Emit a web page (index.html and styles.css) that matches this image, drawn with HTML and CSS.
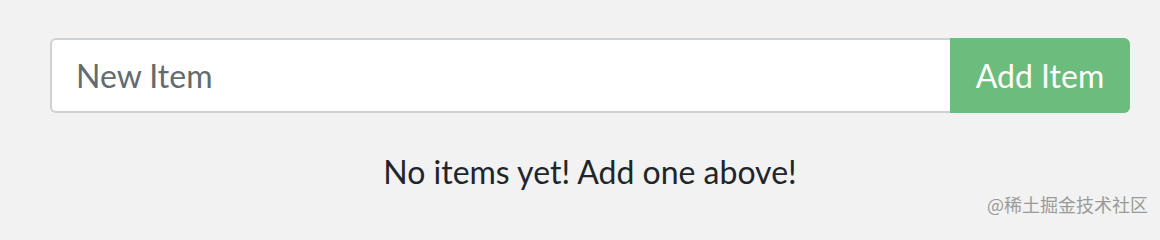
FILE: index.html
```html
<!DOCTYPE html>
<html>
<head>
<meta charset="utf-8">
<link rel="stylesheet" href="styles.css">
</head>
<body>
<div class="page">
  <form class="add-form">
    <input class="item-input" type="text" placeholder="New Item">
    <button class="add-btn" type="button">Add Item</button>
  </form>
  <p class="empty">No items yet! Add one above!</p>
</div>
<div class="watermark">@稀土掘金技术社区</div>
</body>
</html>
```
FILE: styles.css
```css
html, body {
  margin: 0;
  padding: 0;
}
body {
  background: #f2f2f2;
  font-family: Lato, "Noto Sans", sans-serif;
  width: 1160px;
  height: 226px;
  overflow: hidden;
  position: relative;
}
.page {
  padding: 38px 30px 0 50px;
}
.add-form {
  display: flex;
  height: 75px;
  margin: 0;
}
.item-input {
  flex: 1;
  box-sizing: border-box;
  height: 75px;
  margin: 0;
  border: 2px solid #cfd2d4;
  border-right: none;
  border-radius: 6px 0 0 6px;
  background: #fff;
  padding: 0 24px;
  font-family: Lato, sans-serif;
  font-size: 32px;
  color: #495057;
  outline: none;
}
.item-input::placeholder {
  color: #636a70;
}
.add-btn {
  width: 180px;
  height: 75px;
  margin: 0;
  border: none;
  border-radius: 0 6px 6px 0;
  background: #6cbc7d;
  color: #fff;
  font-family: Lato, sans-serif;
  font-size: 32px;
  padding: 0;
}
.empty {
  margin: 40px 0 0;
  text-align: center;
  font-size: 32px;
  color: #212529;
  line-height: 1.2;
}
.watermark {
  position: absolute;
  right: 12px;
  bottom: 9px;
  font-family: "Noto Sans CJK SC", sans-serif;
  font-size: 18px;
  color: #9a9a9a;
}
```
